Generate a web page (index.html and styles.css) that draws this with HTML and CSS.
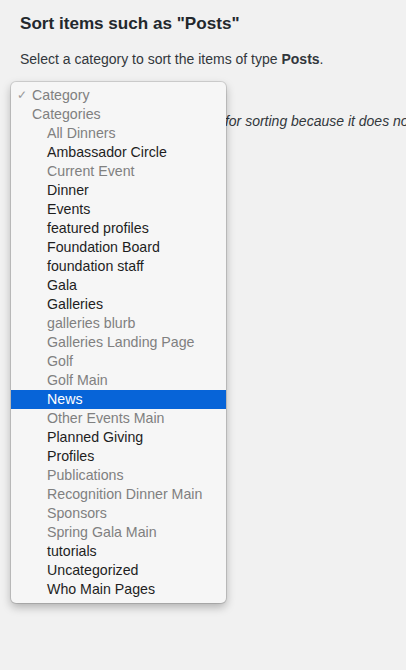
FILE: index.html
```html
<!DOCTYPE html>
<html>
<head>
<meta charset="utf-8">
<link rel="stylesheet" href="styles.css">
</head>
<body>
<div class="wrap">
  <h2 class="title">Sort items such as "Posts"</h2>
  <p class="intro">Select a category to sort the items of type <b>Posts</b>.</p>
  <div class="select-area">
    <p class="note"><i>The taxonomy Category cannot be used for sorting because it does not have any terms.</i></p>
    <ul class="menu">
      <li class="opt dis top"><span class="check">✓</span>Category</li>
      <li class="opt dis top">Categories</li>
      <li class="opt dis">All Dinners</li>
      <li class="opt">Ambassador Circle</li>
      <li class="opt dis">Current Event</li>
      <li class="opt">Dinner</li>
      <li class="opt">Events</li>
      <li class="opt">featured profiles</li>
      <li class="opt">Foundation Board</li>
      <li class="opt">foundation staff</li>
      <li class="opt">Gala</li>
      <li class="opt">Galleries</li>
      <li class="opt dis">galleries blurb</li>
      <li class="opt dis">Galleries Landing Page</li>
      <li class="opt dis">Golf</li>
      <li class="opt dis">Golf Main</li>
      <li class="opt sel">News</li>
      <li class="opt dis">Other Events Main</li>
      <li class="opt">Planned Giving</li>
      <li class="opt">Profiles</li>
      <li class="opt dis">Publications</li>
      <li class="opt dis">Recognition Dinner Main</li>
      <li class="opt dis">Sponsors</li>
      <li class="opt dis">Spring Gala Main</li>
      <li class="opt">tutorials</li>
      <li class="opt">Uncategorized</li>
      <li class="opt">Who Main Pages</li>
    </ul>
  </div>
</div>
</body>
</html>
```

FILE: styles.css
```css
html, body {
  margin: 0;
  padding: 0;
  background: #f1f1f1;
  height: 100%;
  overflow: hidden;
}
body {
  font-family: "Liberation Sans", Arial, sans-serif;
  color: #23282d;
}
.wrap {
  padding: 12px 0 0 20px;
}
.title {
  margin: 0;
  font-size: 17.1px;
  line-height: 24px;
  font-weight: 700;
  color: #23282d;
}
.intro {
  margin: 14px 0 0;
  font-size: 14px;
  line-height: 18px;
  color: #32373c;
}
.intro b { font-weight: 700; }
.select-area {
  position: relative;
  margin-top: 14px;
}
.note {
  margin: 0;
  padding-top: 30px;
  font-size: 14px;
  line-height: 18px;
  white-space: nowrap;
  overflow: hidden;
  text-indent: -48px;
  color: #32373c;
}
.menu {
  position: absolute;
  left: -9px;
  top: 0;
  width: 215px;
  margin: 0;
  padding: 4px 0;
  list-style: none;
  background: #f6f6f6;
  border-radius: 5px;
  box-shadow: 0 0 0 1px rgba(0,0,0,0.12), 0 4px 10px rgba(0,0,0,0.28);
  font-size: 14.2px;
}
.opt {
  position: relative;
  height: 19px;
  line-height: 19px;
  padding-left: 36px;
  color: #1e1e1e;
  white-space: nowrap;
}
.opt.top { padding-left: 21px; }
.opt.dis { color: #808080; }
.opt.sel {
  background: #0764d8;
  color: #ffffff;
}
.check {
  position: absolute;
  left: 6px;
  top: 0;
  font-size: 12px;
  color: #9a9a9a;
}
```
